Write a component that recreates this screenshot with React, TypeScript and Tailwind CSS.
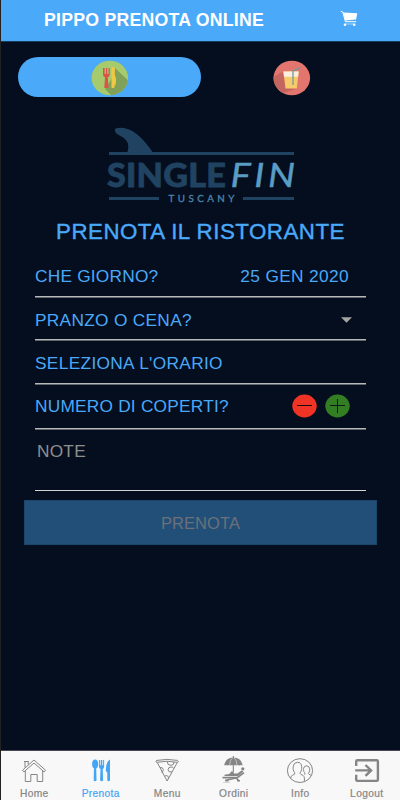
import type { ReactNode } from 'react';

interface Tab {
  label: string;
  icon: ReactNode;
  active?: boolean;
}

function CartIcon() {
  return (
    <svg width="18" height="18" viewBox="0 0 18 18" className="block">
      <path d="M.8 1.2l2 .8 2.6 9.7h10.8" fill="none" stroke="white" strokeWidth="1" />
      <path d="M3 2.6l14.3.6-1.2 6.4-10.9 1z" fill="white" />
      <circle cx="5" cy="14.8" r="1.3" fill="white" />
      <circle cx="14.2" cy="14.8" r="1.3" fill="white" />
      <path d="M5 14h9" stroke="white" strokeWidth=".5" />
    </svg>
  );
}

function RestaurantBadge() {
  return (
    <svg width="38" height="36" viewBox="0 0 38 36" className="block">
      <defs>
        <clipPath id="restaurant-clip">
          <ellipse cx="18.8" cy="18" rx="18.3" ry="17.2" />
        </clipPath>
      </defs>
      <g clipPath="url(#restaurant-clip)">
        <rect width="38" height="36" fill="#a5cb6d" />
        <path d="M24 8l16 15v15H23l-9-9 6-9z" fill="#81a058" />
      </g>
      <path d="M12 8v6.5q0 2 2 2.8L13.3 28h4.2l-.7-10.7q2-.8 2-2.8V8h-1.2v6h-1.3V8h-1.4v6h-1.3V8z" fill="#dc5349" />
      <path d="M20.5 7.3h3.3V15q1.8 3 1.2 7-.3 3-1.5 4l-.3 2h-2.7z" fill="#f0c944" />
    </svg>
  );
}

function DrinkBadge() {
  return (
    <svg width="38" height="36" viewBox="0 0 38 36" className="block">
      <defs>
        <clipPath id="drink-clip">
          <ellipse cx="18.8" cy="18" rx="18.3" ry="17.2" />
        </clipPath>
      </defs>
      <g clipPath="url(#drink-clip)">
        <rect width="38" height="36" fill="#e2766f" />
        <path d="M10.5 11.5L0 17v17h7l17-5.5z" fill="#c5655f" />
      </g>
      <path d="M10.4 11.5h15.2l-1.8 17H12.5z" fill="#f7ca6c" />
      <path d="M10.4 11.5h15.2l-.5 5.2H11z" fill="#fbeee0" />
      <path d="M20 25V11l7.2-3.3" fill="none" stroke="#719c96" strokeWidth="1.3" />
    </svg>
  );
}

function Logo() {
  return (
    <svg width="190" height="77" viewBox="107 126 190 77" className="relative left-px mx-auto block">
      <path d="M115 128.7q4-1.7 9-.7c12 2.4 20 12 28.5 24H127.4c1.5-5 1.4-10-3-13.6-2.8-2.4-8.9-4.2-9.4-7.5z" fill="#204361" />
      <path d="M109 152h185v3H109zM109 197h50v3h-50zM243 197h51v3h-51z" fill="#204361" />
      <text
        x="107"
        y="187"
        fontSize="32.5"
        textLength="119"
        lengthAdjust="spacingAndGlyphs"
        strokeWidth=".8"
        className="fill-[#204361] stroke-[#204361] font-black [font-family:Lato,sans-serif]"
      >
        SINGLE
      </text>
      <text
        x="230.5"
        y="187"
        fontSize="32.5"
        textLength="68"
        lengthAdjust="spacingAndGlyphs"
        className="fill-[#5a9dc4] tracking-[3px] italic [font-family:Lato,sans-serif]"
        stroke="#5a9dc4"
        strokeWidth=".4"
      >
        FIN
      </text>
      <text x="168.5" y="202" fontSize="9.8" textLength="66" stroke="#4b86aa" strokeWidth=".3" className="fill-[#4b86aa] [font-family:Lato,sans-serif]">
        TUSCANY
      </text>
    </svg>
  );
}

function HomeIcon() {
  return (
    <svg width="26" height="26" viewBox="0 0 26 26" fill="none" stroke="#858585" strokeWidth="1" className="block">
      <path d="M1.5 13.2L13 3l11.5 10.2-1.4 1.7L13 6 2.9 14.9z" />
      <path d="M4.3 13.8v10.7h5.5v-7h6.4v7h5.5V13.8M4 10.5V4.5h3.2v3.1M3 4.5h4.8" />
    </svg>
  );
}

function CutleryIcon() {
  return (
    <svg width="26" height="26" viewBox="0 0 26 26" fill="#42a5f5" className="block">
      <ellipse cx="7.1" cy="7" rx="3" ry="4.5" />
      <path d="M6 10h2.2l.3 13.5q-1.4 1.6-2.8 0z" />
      <path d="M10.9 3h1v5.2h.8V3h1.6v5.2h.8V3h1v6.5q0 2-1.4 2.6l.4 11.4q-1.5 1.6-3 0l.4-11.4q-1.6-.7-1.6-2.6z" />
      <path d="M22 2.5v21q-1.5 1.6-2.7 0v-8q-1.5-.7-1.5-2.5 0-8 4.2-10.5z" />
    </svg>
  );
}

function PizzaIcon() {
  return (
    <svg width="26" height="26" viewBox="0 0 26 26" fill="none" stroke="#858585" strokeWidth="1" className="block">
      <path d="M2.5 5.4Q1 3.7 3 3.4q10-2 20.5 0 1.4.4.3 2Q13 3.1 2.5 5.4zM3.5 6l9.6 18L23 6" />
      <path d="M13.3 4.6q0 3.8 3.6 3.8 3.3-.3 3.2-3.4" />
      <path d="M6 10.5q3-.3 3.3 2 .2 2-1.7 2.7M18 15q-3.9.5-4-2.2.1-2.8 3.2-2.8 2 .1 2.6 1.3M10.9 19q1.8-1 3 .2.8 1 .4 2.4" />
    </svg>
  );
}

function BeachIcon() {
  return (
    <svg width="26" height="28" viewBox="0 0 26 28" fill="#858585" className="block">
      <path d="M3.2 9.6Q4 1.8 12.3 1.4q8.5.4 9.3 8.2-1.5-1.4-3.3 0-1.5-1.4-3 0-1.3-1.3-2.9-.2-1.6-1.1-3 .2-1.5-1.4-3 0-1.7-1.4-3.2 0z" />
      <path d="M8.7 9Q8.4 4 12 1.6M15.9 9Q16.2 4 12.8 1.6" fill="none" stroke="#f8f8f8" strokeWidth=".5" />
      <path d="M11.8 0h1.1v16.5h-1.1z" />
      <circle cx="21.8" cy="12.8" r="1.6" />
      <path d="M3.5 18.7l4.7-.8 2.8-2.9 2.2 2.4 3.1.2 4.4-3.2 1.8 1.2-5.4 4.4H3.5z" />
      <path d="M1.5 21.6h14.8l6.7-5" fill="none" stroke="#858585" strokeWidth="1.7" />
      <path d="M4 24.5l13-3M14.5 22l3.5 2.5M4.5 24.8h3M16 24.8h3" fill="none" stroke="#858585" strokeWidth="1.4" />
      <path d="M2 26.5h7" stroke="#bdbdbd" strokeWidth=".6" />
    </svg>
  );
}

function PeopleIcon() {
  return (
    <svg width="28" height="26" viewBox="0 0 28 26" fill="none" stroke="#858585" strokeWidth="1" className="block">
      <ellipse cx="14" cy="13.6" rx="12.6" ry="11.9" />
      <path d="M4.8 21.4q-.5-2.3 1.7-3.1 3.2-1 2.1-2.8C7 13.3 7 12.3 7.2 9.5q.3-4 4.2-4.2 4 .1 4.3 4.3c.1 2.7 0 3.8-1.4 5.9-1 1.8 1.3 2 2.7 2.9 1.5.9 1.5 2.8 1.4 5.6" />
      <path d="M18.6 17.7q.8-.8-.1-2.1c-1-1.4-1.1-2.4-.9-4.2q.5-2.6 3.1-2.6 2.7.2 3 3c.1 2-.1 2.8-1.1 4.2-.6 1.2 1 1.5 2.4 2.3" />
    </svg>
  );
}

function LogoutIcon() {
  return (
    <svg width="26" height="26" viewBox="0 0 26 26" fill="none" stroke="#858585" strokeWidth="2.4" className="block">
      <path d="M2.2 9V4.4q0-1.2 1.2-1.2h19.3q1.2 0 1.2 1.2v18.3q0 1.2-1.2 1.2H3.4q-1.2 0-1.2-1.2v-5" />
      <path d="M1.2 13.4h15M11.5 8l5.6 5.4-5.6 5.4" />
    </svg>
  );
}

const tabs: Tab[] = [
  { label: 'Home', icon: <HomeIcon /> },
  { label: 'Prenota', icon: <CutleryIcon />, active: true },
  { label: 'Menu', icon: <PizzaIcon /> },
  { label: 'Ordini', icon: <BeachIcon /> },
  { label: 'Info', icon: <PeopleIcon /> },
  { label: 'Logout', icon: <LogoutIcon /> },
];

function Row({ className, children }: { className: string; children: ReactNode }) {
  return (
    <div className={`flex items-center justify-between border-b border-[#b9b9ba] shadow-[0_1px_0_#62666e] ${className}`}>
      {children}
    </div>
  );
}

export default function App() {
  return (
    <div className="flex h-[800px] w-[400px] flex-col overflow-hidden border-l border-[#222222] bg-[#050e1f] font-['Liberation_Sans',Arial,sans-serif] text-[17.3px] leading-5 tracking-[0.22px] text-[#4aa9f8]">
      <header className="flex h-[42px] shrink-0 items-center justify-between border-b border-[#173c5c] bg-[#4aa9f8] pr-[42px] pl-[43px] text-white">
        <h1 className="pb-px text-[17.7px] font-bold tracking-[0.24px] whitespace-nowrap">PIPPO PRENOTA ONLINE</h1>
        <div className="-mt-1">
          <CartIcon />
        </div>
      </header>

      <div className="mt-[15px] flex shrink-0 pl-[17px]">
        <button className="flex h-10 w-[183px] items-center justify-center rounded-full bg-[#4aa9f8] pt-0.5">
          <RestaurantBadge />
        </button>
        <button className="flex h-10 w-[181px] items-center justify-center pt-0.5">
          <DrinkBadge />
        </button>
      </div>

      <main className="flex-1 pt-[29px]">
        <Logo />
        <h2 className="mt-[15px] text-center text-[22.3px] leading-7 tracking-[0.5px] [-webkit-text-stroke:0.4px_#4aa9f8]">PRENOTA IL RISTORANTE</h2>

        <form className="mr-[34px] ml-[34px]">
          <Row className="mt-[9px] h-[42px] pt-px pr-[17px]">
            <span>CHE GIORNO?</span>
            <span className="tracking-[0.36px]">25 GEN 2020</span>
          </Row>
          <Row className="h-[43px] pt-[3px] pr-[14px]">
            <span className="tracking-[0.3px]">PRANZO O CENA?</span>
            <svg width="11" height="6" viewBox="0 0 11 6">
              <path d="M0 .3h11L5.5 5.8z" fill="#a4a4a0" />
            </svg>
          </Row>
          <Row className="h-11 pt-0.5">
            <span className="tracking-[0.33px]">SELEZIONA L'ORARIO</span>
          </Row>
          <Row className="h-[45px] pr-4">
            <span>NUMERO DI COPERTI?</span>
            <span className="flex gap-2">
              <svg width="25" height="24" viewBox="0 0 25 24">
                <ellipse cx="12.5" cy="12" rx="12.2" ry="11.4" fill="#ef3325" />
                <path d="M5 11.5h15" stroke="#190b12" />
              </svg>
              <svg width="25" height="24" viewBox="0 0 25 24">
                <ellipse cx="12.5" cy="12" rx="12.2" ry="11.4" fill="#337d22" />
                <path d="M5 11.5h15M12.5 5v14" stroke="#0a1a18" />
              </svg>
            </span>
          </Row>
          <div className="h-[62px] border-b border-[#d2d2d0] pt-3 pl-0.5 text-[#8e8e8e]">NOTE</div>
        </form>

        <button className="mt-[9px] ml-[23px] block h-[45px] w-[353px] border border-[#1b456b] bg-[#224f78] text-[16.5px] tracking-[0.1px] text-[#6c7078]">
          PRENOTA
        </button>
      </main>

      <nav className="flex h-[50px] shrink-0 border-t border-[#49464f] bg-[#f8f8f8]">
        {tabs.map(tab => (
          <div
            key={tab.label}
            className={`flex w-[66.5px] flex-col items-center text-[10.2px] leading-3 tracking-[0.35px] [-webkit-text-stroke:0.2px_currentColor] ${tab.active ? 'text-[#42a5f5]' : 'text-[#858585]'}`}
          >
            <div className="flex h-[37px] items-center pt-px">{tab.icon}</div>
            {tab.label}
          </div>
        ))}
      </nav>
    </div>
  );
}
